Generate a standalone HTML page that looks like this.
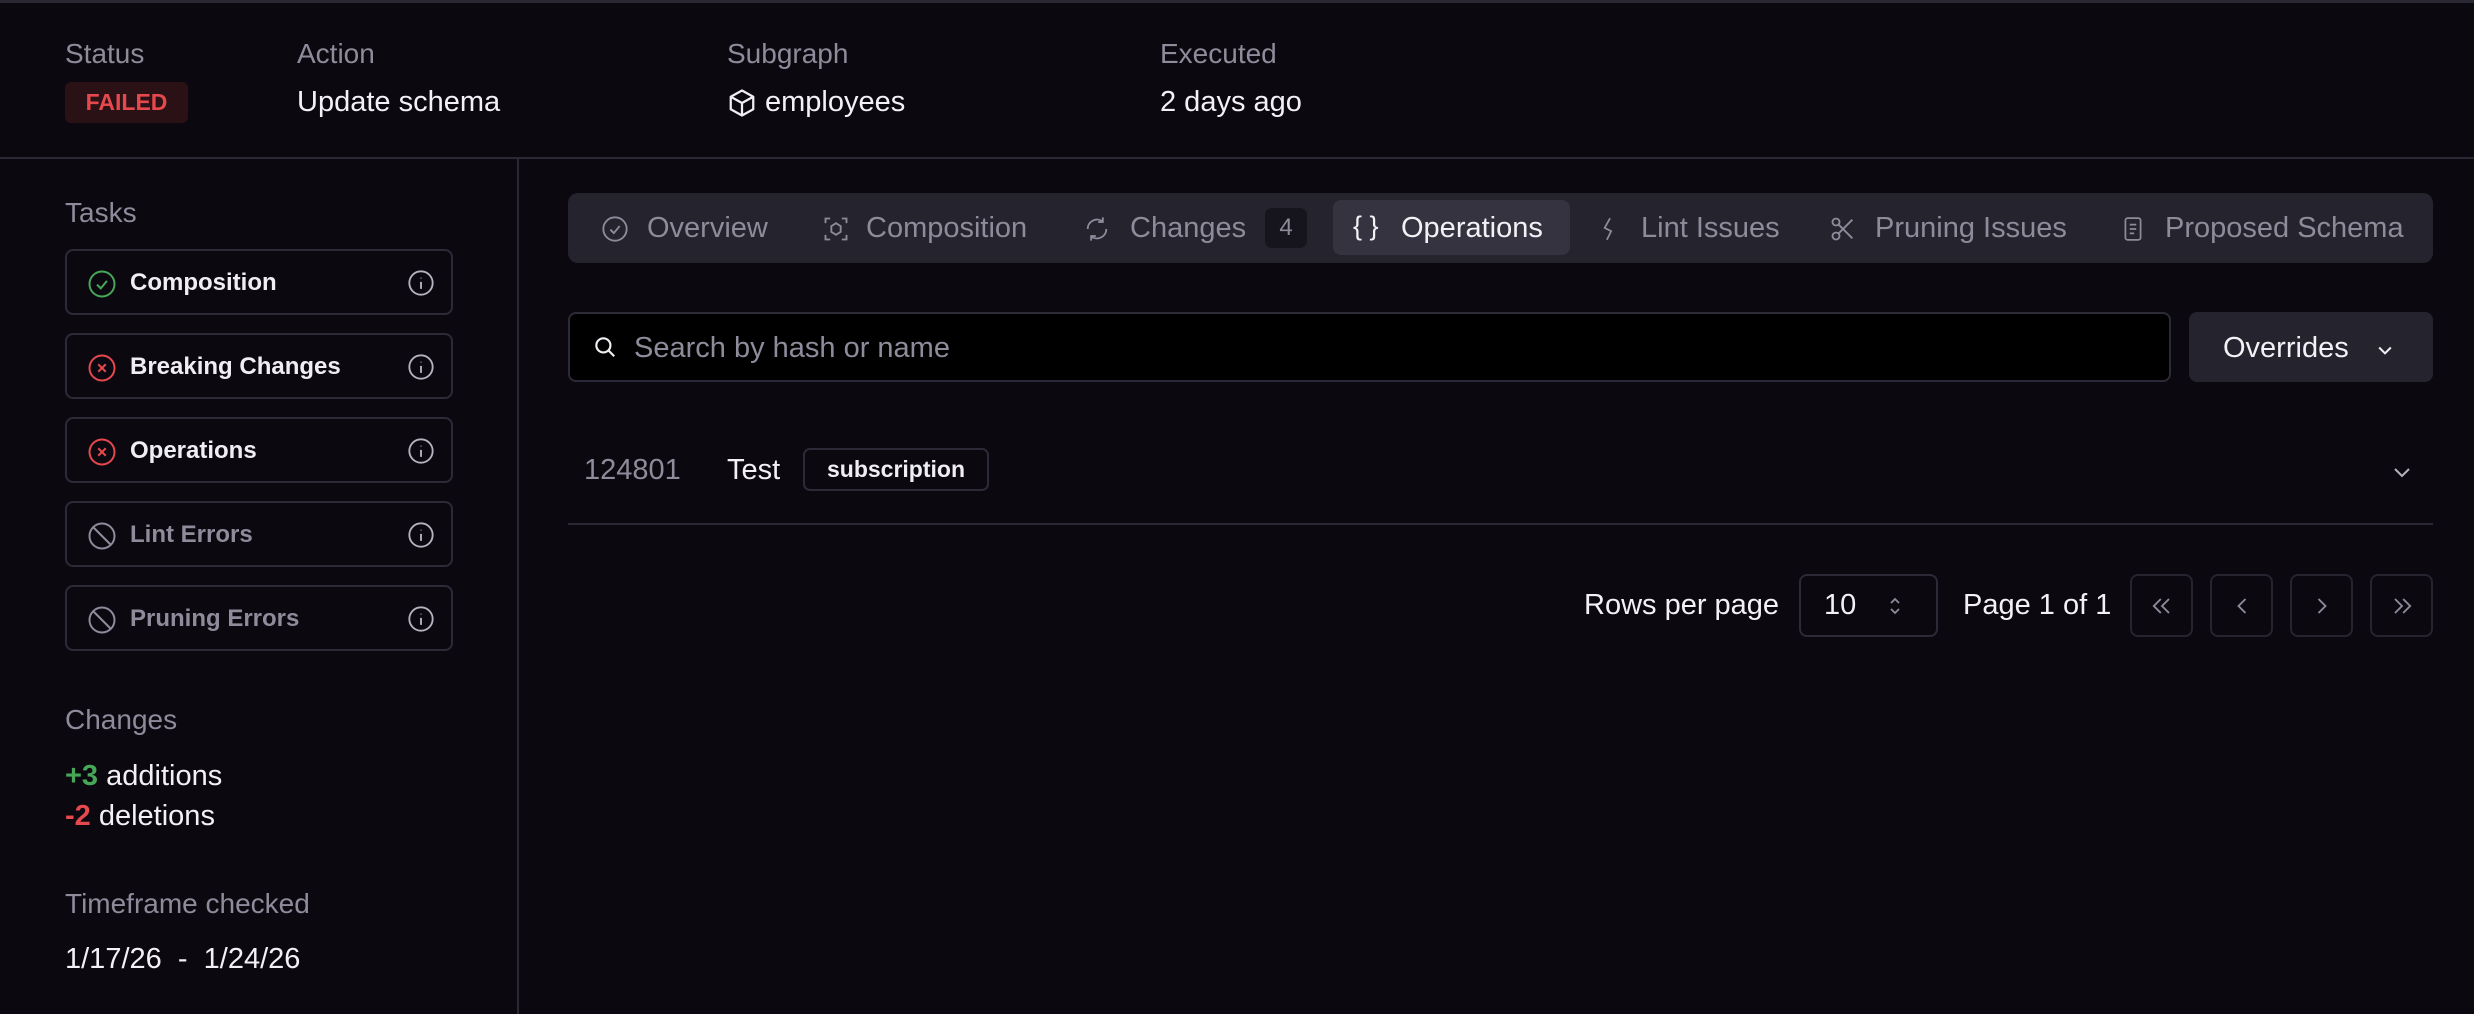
<!DOCTYPE html>
<html><head><meta charset="utf-8"><style>
*{box-sizing:border-box;margin:0;padding:0}
body{width:2474px;height:1014px;background:#0b0810;font-family:"Liberation Sans",sans-serif;color:#efeef3;position:relative;overflow:hidden}
.a{position:absolute;white-space:nowrap}
.m{color:#8e8b9b}
.lbl{font-size:28px;color:#8e8b9b}
.val{font-size:29px;color:#f2f1f5}
.task{position:absolute;left:65px;width:388px;height:66px;border:2px solid #2c2a36;border-radius:8px}
.task span{position:absolute;left:63px;top:18px;font-size:24px;font-weight:bold}
.task svg{position:absolute}
.tab{position:absolute;top:212px;font-size:29px;color:#8e8b9b}
.pbtn{position:absolute;top:574px;width:63px;height:63px;border:2px solid #26242f;border-radius:8px}
</style></head><body>
<div class="a" style="left:0;top:0;width:2474px;height:3px;background:#2a2833"></div>
<div class="a lbl" style="left:65px;top:38px">Status</div>
<div class="a" style="left:65px;top:82px;width:123px;height:41px;background:#2a1116;border-radius:6px;color:#e5484d;font-size:23px;font-weight:bold;text-align:center;line-height:41px">FAILED</div>
<div class="a lbl" style="left:297px;top:38px">Action</div>
<div class="a val" style="left:297px;top:86px">Update schema</div>
<div class="a lbl" style="left:727px;top:38px">Subgraph</div>
<svg class="a" style="left:727px;top:87px" width="30" height="32" viewBox="0 0 24 24" fill="none" stroke="#efeef3" stroke-width="1.8" stroke-linejoin="round"><path d="M12 2l9 5v10l-9 5-9-5V7z M3 7l9 5 9-5 M12 12v10"/></svg>
<div class="a val" style="left:765px;top:86px">employees</div>
<div class="a lbl" style="left:1160px;top:38px">Executed</div>
<div class="a val" style="left:1160px;top:86px">2 days ago</div>
<div class="a" style="left:0;top:157px;width:2474px;height:2px;background:#2a2833"></div>
<div class="a" style="left:517px;top:159px;width:2px;height:855px;background:#2a2833"></div>

<div class="a lbl" style="left:65px;top:197px">Tasks</div>
<div class="task" style="top:249px"><svg style="left:20px;top:18px" width="30" height="30" viewBox="0 0 24 24" fill="none" stroke="#46a758" stroke-width="1.6"><circle cx="12" cy="12" r="10"/><path d="M8 12.5l3 3 5-6"/></svg><span>Composition</span><svg style="left:340px;top:18px" width="28" height="28" viewBox="0 0 24 24" fill="none" stroke="#b5b3bf" stroke-width="1.6"><circle cx="12" cy="12" r="10"/><path d="M12 11v6M12 7.5v.5"/></svg></div>
<div class="task" style="top:333px"><svg style="left:20px;top:18px" width="30" height="30" viewBox="0 0 24 24" fill="none" stroke="#e5484d" stroke-width="1.6"><circle cx="12" cy="12" r="10"/><path d="M9 9l6 6M15 9l-6 6"/></svg><span>Breaking Changes</span><svg style="left:340px;top:18px" width="28" height="28" viewBox="0 0 24 24" fill="none" stroke="#b5b3bf" stroke-width="1.6"><circle cx="12" cy="12" r="10"/><path d="M12 11v6M12 7.5v.5"/></svg></div>
<div class="task" style="top:417px"><svg style="left:20px;top:18px" width="30" height="30" viewBox="0 0 24 24" fill="none" stroke="#e5484d" stroke-width="1.6"><circle cx="12" cy="12" r="10"/><path d="M9 9l6 6M15 9l-6 6"/></svg><span>Operations</span><svg style="left:340px;top:18px" width="28" height="28" viewBox="0 0 24 24" fill="none" stroke="#b5b3bf" stroke-width="1.6"><circle cx="12" cy="12" r="10"/><path d="M12 11v6M12 7.5v.5"/></svg></div>
<div class="task" style="top:501px"><svg style="left:20px;top:18px" width="30" height="30" viewBox="0 0 24 24" fill="none" stroke="#8e8b9b" stroke-width="1.6"><circle cx="12" cy="12" r="10"/><path d="M5 5l14 14"/></svg><span class="m">Lint Errors</span><svg style="left:340px;top:18px" width="28" height="28" viewBox="0 0 24 24" fill="none" stroke="#b5b3bf" stroke-width="1.6"><circle cx="12" cy="12" r="10"/><path d="M12 11v6M12 7.5v.5"/></svg></div>
<div class="task" style="top:585px"><svg style="left:20px;top:18px" width="30" height="30" viewBox="0 0 24 24" fill="none" stroke="#8e8b9b" stroke-width="1.6"><circle cx="12" cy="12" r="10"/><path d="M5 5l14 14"/></svg><span class="m">Pruning Errors</span><svg style="left:340px;top:18px" width="28" height="28" viewBox="0 0 24 24" fill="none" stroke="#b5b3bf" stroke-width="1.6"><circle cx="12" cy="12" r="10"/><path d="M12 11v6M12 7.5v.5"/></svg></div>

<div class="a lbl" style="left:65px;top:704px">Changes</div>
<div class="a val" style="left:65px;top:760px"><b style="color:#46a758">+3</b> additions</div>
<div class="a val" style="left:65px;top:800px"><b style="color:#e5484d">-2</b> deletions</div>
<div class="a lbl" style="left:65px;top:888px">Timeframe checked</div>
<div class="a val" style="left:65px;top:943px">1/17/26 &nbsp;- &nbsp;1/24/26</div>

<div class="a" style="left:568px;top:193px;width:1865px;height:70px;background:#25232e;border-radius:10px"></div>
<div class="a" style="left:1333px;top:200px;width:237px;height:55px;background:#35333f;border-radius:8px"></div>
<svg class="a" style="left:601px;top:215px" width="28" height="28" viewBox="0 0 24 24" fill="none" stroke="#8e8b9b" stroke-width="1.6"><circle cx="12" cy="12" r="10"/><path d="M8 12.5l3 3 5-6"/></svg>
<div class="tab" style="left:647px">Overview</div>
<svg class="a" style="left:822px;top:215px" width="28" height="28" viewBox="0 0 24 24" fill="none" stroke="#8e8b9b" stroke-width="1.6"><path d="M3 7V3h4M17 3h4v4M21 17v4h-4M7 21H3v-4"/><path d="M12 7l4 2.5v5L12 17l-4-2.5v-5z"/></svg>
<div class="tab" style="left:866px">Composition</div>
<svg class="a" style="left:1083px;top:215px" width="28" height="28" viewBox="0 0 24 24" fill="none" stroke="#8e8b9b" stroke-width="1.6"><path d="M20 12a8 8 0 0 1-13 6.3M4 12a8 8 0 0 1 13-6.3M17 2v4h-4M7 22v-4h4"/></svg>
<div class="tab" style="left:1130px">Changes</div>
<div class="a" style="left:1265px;top:208px;width:42px;height:40px;background:#16141c;border-radius:7px;color:#8e8b9b;font-size:24px;text-align:center;line-height:40px">4</div>
<div class="a" style="left:1353px;top:211px;font-size:27px;color:#f2f1f5">{ }</div>
<div class="tab" style="left:1401px;color:#f2f1f5">Operations</div>
<svg class="a" style="left:1596px;top:214px" width="26" height="30" viewBox="0 0 24 24" fill="none" stroke="#8e8b9b" stroke-width="1.6"><path d="M13 2L8 11l6 3-4 8"/></svg>
<div class="tab" style="left:1641px">Lint Issues</div>
<svg class="a" style="left:1829px;top:215px" width="28" height="28" viewBox="0 0 24 24" fill="none" stroke="#8e8b9b" stroke-width="1.6"><circle cx="6" cy="6" r="3"/><circle cx="6" cy="18" r="3"/><path d="M8.1 8.1L20 20M8.1 15.9L20 4"/></svg>
<div class="tab" style="left:1875px">Pruning Issues</div>
<svg class="a" style="left:2120px;top:213px" width="26" height="32" viewBox="0 0 24 24" fill="none" stroke="#8e8b9b" stroke-width="1.6"><rect x="5" y="2" width="14" height="20" rx="2"/><path d="M9 8h6M9 12h6M9 16h4"/></svg>
<div class="tab" style="left:2165px">Proposed Schema</div>

<div class="a" style="left:568px;top:312px;width:1603px;height:70px;background:#000;border:2px solid #2c2a36;border-radius:8px"></div>
<svg class="a" style="left:592px;top:334px" width="26" height="26" viewBox="0 0 24 24" fill="none" stroke="#efeef3" stroke-width="2"><circle cx="10.5" cy="10.5" r="6.5"/><path d="M15.5 15.5l5 5"/></svg>
<div class="a" style="left:634px;top:332px;font-size:29px;color:#8e8b9b">Search by hash or name</div>
<div class="a" style="left:2189px;top:312px;width:244px;height:70px;background:#25232e;border-radius:8px"></div>
<div class="a" style="left:2223px;top:332px;font-size:29px;color:#f2f1f5">Overrides</div>
<svg class="a" style="left:2375px;top:340px" width="20" height="20" viewBox="0 0 24 24" fill="none" stroke="#efeef3" stroke-width="2.4"><path d="M5 9l7 7 7-7"/></svg>

<div class="a" style="left:584px;top:454px;font-size:29px;color:#8e8b9b">124801</div>
<div class="a" style="left:727px;top:454px;font-size:29px;color:#f2f1f5">Test</div>
<div class="a" style="left:803px;top:448px;width:186px;height:43px;border:2px solid #2c2a36;border-radius:7px;font-size:23px;font-weight:bold;text-align:center;line-height:39px">subscription</div>
<svg class="a" style="left:2390px;top:460px" width="24" height="24" viewBox="0 0 24 24" fill="none" stroke="#b5b3bf" stroke-width="2"><path d="M5 9l7 7 7-7"/></svg>
<div class="a" style="left:568px;top:523px;width:1865px;height:2px;background:#2a2833"></div>

<div class="a" style="left:1584px;top:589px;font-size:29px;color:#f2f1f5">Rows per page</div>
<div class="a" style="left:1799px;top:574px;width:139px;height:63px;border:2px solid #2c2a36;border-radius:8px"></div>
<div class="a" style="left:1824px;top:589px;font-size:29px;color:#f2f1f5">10</div>
<svg class="a" style="left:1886px;top:594px" width="18" height="24" viewBox="0 0 18 24" fill="none" stroke="#8e8b9b" stroke-width="1.8"><path d="M5 9l4-4 4 4M5 15l4 4 4-4"/></svg>
<div class="a" style="left:1963px;top:589px;font-size:29px;color:#f2f1f5">Page 1 of 1</div>
<div class="pbtn" style="left:2130px"></div><div class="pbtn" style="left:2210px"></div><div class="pbtn" style="left:2290px"></div><div class="pbtn" style="left:2370px"></div>
<svg class="a" style="left:2148px;top:592px" width="28" height="28" viewBox="0 0 24 24" fill="none" stroke="#8e8b9b" stroke-width="1.6"><path d="M11 6l-6 6 6 6M18 6l-6 6 6 6"/></svg>
<svg class="a" style="left:2228px;top:592px" width="28" height="28" viewBox="0 0 24 24" fill="none" stroke="#8e8b9b" stroke-width="1.6"><path d="M15 6l-6 6 6 6"/></svg>
<svg class="a" style="left:2308px;top:592px" width="28" height="28" viewBox="0 0 24 24" fill="none" stroke="#8e8b9b" stroke-width="1.6"><path d="M9 6l6 6-6 6"/></svg>
<svg class="a" style="left:2388px;top:592px" width="28" height="28" viewBox="0 0 24 24" fill="none" stroke="#8e8b9b" stroke-width="1.6"><path d="M6 6l6 6-6 6M13 6l6 6-6 6"/></svg>
</body></html>
